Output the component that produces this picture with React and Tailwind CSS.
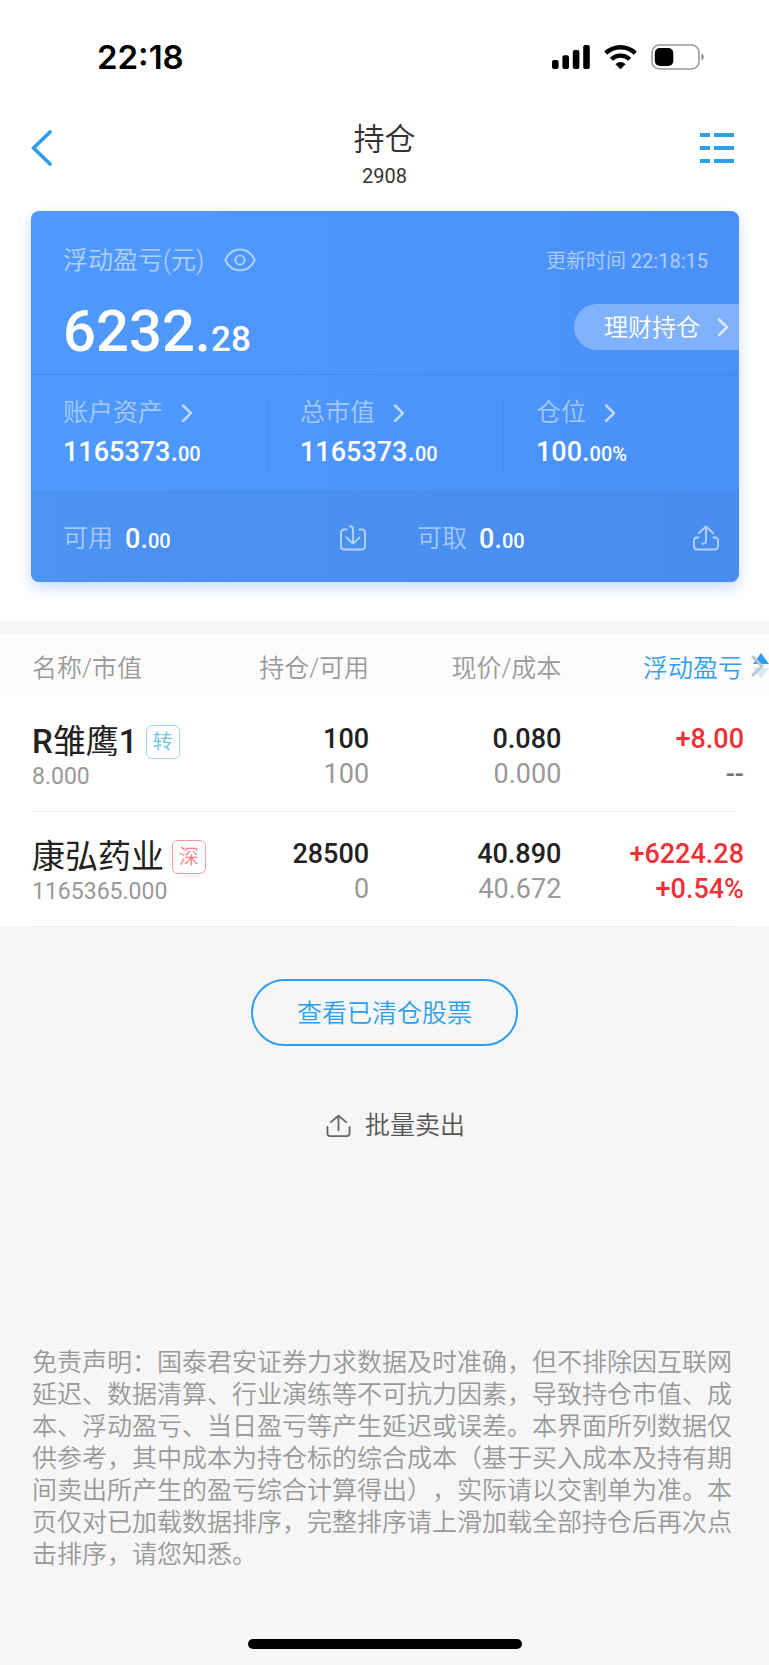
import React from "react";

const holdings = [
  {
    name: "R雏鹰1",
    tag: "转",
    tagClass: "border-[#9bd6ec] text-[#6cc5e4]",
    marketValue: "8.000",
    position: "100",
    available: "100",
    price: "0.080",
    cost: "0.000",
    profit: "+8.00",
    rate: "--",
    rateClass: "text-[#777777]",
  },
  {
    name: "康弘药业",
    tag: "深",
    tagClass: "border-[#fb9aa2] text-[#fb7f89]",
    marketValue: "1165365.000",
    position: "28500",
    available: "0",
    price: "40.890",
    cost: "40.672",
    profit: "+6224.28",
    rate: "+0.54%",
    rateClass: "text-[#f03037]",
  },
];

function Chevron({ className = "" }) {
  return (
    <svg className={className} width="12" height="20" viewBox="0 0 12 20" fill="none" stroke="currentColor" strokeWidth="2.5" strokeLinecap="round" strokeLinejoin="round" aria-hidden="true">
      <path d="M2 2.5 10 10.2 2 18" />
    </svg>
  );
}

function Amount({ whole, fraction }) {
  return (
    <p className="text-[27px] font-medium leading-[38px] text-white">
      {whole}.<span className="text-xl leading-none">{fraction}</span>
    </p>
  );
}

function StatusBar() {
  return (
    <div className="flex h-[114px] items-center justify-between pl-[97px] pr-16">
      <span className="font-['Inter',sans-serif] text-[33px] font-semibold leading-10 text-black">22:18</span>
      <div className="flex items-center gap-[14px]">
        <svg width="38" height="24" viewBox="0 0 38 24" fill="#000" aria-hidden="true">
          <rect x="0" y="15" width="6.6" height="9" rx="2" />
          <rect x="10.4" y="10.3" width="6.6" height="13.7" rx="2" />
          <rect x="20.8" y="5" width="6.6" height="19" rx="2" />
          <rect x="31.2" y="0" width="6.6" height="24" rx="2" />
        </svg>
        <svg width="33" height="24" viewBox="0 0 33 24" aria-hidden="true">
          <path d="M1.7 8.2a21.4 21.4 0 0 1 29.6 0" fill="none" stroke="#000" strokeWidth="4.4" />
          <path d="M7.3 14.2a13.4 13.4 0 0 1 18.4 0" fill="none" stroke="#000" strokeWidth="4.2" />
          <path d="M16.5 24 11.8 19.2a6.8 6.8 0 0 1 9.4 0Z" fill="#000" stroke="#000" strokeWidth="0.6" strokeLinejoin="round" />
        </svg>
        <svg width="54" height="26" viewBox="0 0 54 26" aria-hidden="true">
          <rect x="1" y="1" width="47" height="24" rx="7.5" fill="none" stroke="#999" strokeWidth="1.6" />
          <rect x="3.8" y="4" width="18.5" height="18" rx="5" fill="#000" />
          <path d="M50.4 9.5c3.4 1 3.4 6 0 7Z" fill="#999" />
        </svg>
      </div>
    </div>
  );
}

function Header() {
  return (
    <header className="grid grid-cols-[1fr_auto_1fr] px-[31px] pt-[5px]">
      <button type="button" aria-label="返回" className="mt-[7px] h-11 w-11 justify-self-start text-[#2e9fee]">
        <svg width="22" height="36" viewBox="0 0 22 36" fill="none" stroke="currentColor" strokeWidth="3.8" strokeLinecap="round" strokeLinejoin="round" aria-hidden="true">
          <path d="M19 2 2.5 18 19 34" />
        </svg>
      </button>
      <div className="text-center text-[#333333]">
        <h1 className="text-[31px] font-[350] leading-[42px]">持仓</h1>
        <p className="text-xl font-normal leading-[30px]">2908</p>
      </div>
      <button type="button" aria-label="菜单" className="mt-[7px] flex h-11 w-11 items-center justify-end justify-self-end pr-1 text-[#2e9fee]">
        <svg width="34" height="30" viewBox="0 0 34 30" fill="currentColor" aria-hidden="true">
          <path d="M0 0h10v4H0zM14 0h20v4H14zM0 13h10v4H0zM14 13h20v4H14zM0 26h10v4H0zM14 26h20v4H14z" />
        </svg>
      </button>
    </header>
  );
}

function Stat({ label, whole, fraction, divided }) {
  return (
    <div className={divided ? "border-l border-dotted border-[#3f83e6] pl-8" : "pl-8"}>
      <a href="#detail" className="flex items-center text-white/50">
        <span className="text-[25px] font-[350] leading-[30px]">{label}</span>
        <Chevron className="ml-[18px] text-white/65" />
      </a>
      <div className="mt-[5px]">
        <Amount whole={whole} fraction={fraction} />
      </div>
    </div>
  );
}

function Summary() {
  return (
    <section className="ml-[31px] mr-[30px] mt-5 overflow-hidden rounded-lg bg-linear-to-r from-[#5099fc] to-[#4990f8] shadow-[0_6px_14px_rgba(73,144,248,0.3)]">
      <div className="border-b border-[#4389ee] pb-6 pl-8 pt-[34px]">
        <div className="flex items-center justify-between pr-[31px] leading-8 text-white/55">
          <div className="flex items-center">
            <span className="text-[25px] font-[350]">浮动盈亏(元)</span>
            <button type="button" aria-label="显示或隐藏金额" className="mb-0.5 ml-5">
              <svg width="32" height="24" viewBox="0 0 32 24" fill="none" stroke="currentColor" strokeWidth="1.9" aria-hidden="true">
                <path d="M1.3 12C4.500 5.200 9.600 1.500 16 1.500S27.500 5.200 30.700 12C27.500 18.800 22.400 22.300 16 22.300S4.500 18.800 1.300 12Z" strokeLinejoin="round" />
                <circle cx="16" cy="12" r="4.600" />
              </svg>
            </button>
          </div>
          <span className="text-xl font-[350]">
            更新时间 <span className="font-normal">22:18:15</span>
          </span>
        </div>
        <div className="mt-[27px] flex h-[46px] items-start justify-between">
          <p className="text-[58px] font-medium leading-[54px] text-white">
            6232.<span className="text-[35px] leading-none">28</span>
          </p>
          <button type="button" className="flex h-full items-center rounded-l-full bg-white/30 pl-[30px] pr-2.5 text-white">
            <span className="pt-0.5 text-[24px] font-[350] leading-8">理财持仓</span>
            <Chevron className="ml-[17px] text-white/75" />
          </button>
        </div>
      </div>
      <div className="grid grid-cols-3 pb-[19px] pt-[23px]">
        <Stat label="账户资产" whole="1165373" fraction="00" />
        <Stat label="总市值" whole="1165373" fraction="00" divided />
        <Stat label="仓位" whole="100" fraction="00%" divided />
      </div>
      <div className="grid h-[92px] grid-cols-2 bg-[#3f7fcc]/20 pt-1.5">
        <div className="flex items-center gap-3 pl-8 pr-[19px]">
          <span className="text-[25px] font-[350] leading-8 text-white/50">可用</span>
          <Amount whole="0" fraction="00" />
          <button type="button" aria-label="转入" className="mb-0.5 ml-auto text-white/60">
            <svg width="26" height="26" viewBox="0 0 26 26" fill="none" stroke="currentColor" strokeWidth="1.9" strokeLinecap="round" strokeLinejoin="round" aria-hidden="true">
              <path d="M6.500 4.500H4a3 3 0 0 0-3 3V21.500a3 3 0 0 0 3 3H22a3 3 0 0 0 3-3V7.500a3 3 0 0 0-3-3H19.500" />
              <path d="M10 1.200c2.200 0 3 1.200 3 3.300V18.500M6.500 12.500 13 18.600 19.500 12.500" />
            </svg>
          </button>
        </div>
        <div className="flex items-center gap-3 pl-8 pr-5">
          <span className="text-[25px] font-[350] leading-8 text-white/50">可取</span>
          <Amount whole="0" fraction="00" />
          <button type="button" aria-label="转出" className="mb-0.5 ml-auto text-white/60">
            <svg width="26" height="26" viewBox="0 0 26 26" fill="none" stroke="currentColor" strokeWidth="1.9" strokeLinecap="round" strokeLinejoin="round" aria-hidden="true">
              <path d="M5.500 12.500H4a3 3 0 0 0-3 3V21.500a3 3 0 0 0 3 3H22a3 3 0 0 0 3-3V15.500a3 3 0 0 0-3-3H20.500" />
              <path d="M9.500 18.800c2.500 0 3.500-1.200 3.500-3.600V1.800M6 8 13 1.400 20 8" />
            </svg>
          </button>
        </div>
      </div>
    </section>
  );
}

function Separator() {
  return (
    <tr aria-hidden="true">
      <td colSpan={4} className="pl-8 pr-[33px]">
        <div className="h-px bg-[#ececec]" />
      </td>
    </tr>
  );
}

function StockName({ name }) {
  return (
    <span className="text-[33px] leading-9 text-[#222222]">
      {name.split(/([A-Z0-9]+)/).map((part, i) => (
        <span key={i} className={i % 2 ? "font-medium" : "font-normal"}>{part}</span>
      ))}
    </span>
  );
}

function Holdings() {
  return (
    <table className="w-full table-fixed border-collapse bg-white">
      <colgroup>
        <col className="w-[25%]" />
        <col className="w-[23%]" />
        <col className="w-[25%]" />
        <col className="w-[27%]" />
      </colgroup>
      <thead>
        <tr className="h-[63px] bg-[#fcfcfc] text-[25px] leading-8 text-[#999999]">
          <th scope="col" className="whitespace-nowrap pl-8 pt-1.5 text-left font-[350]">名称/市值</th>
          <th scope="col" className="whitespace-nowrap pt-1.5 text-right font-[350]">持仓/可用</th>
          <th scope="col" className="whitespace-nowrap pt-1.5 text-right font-[350]">现价/成本</th>
          <th scope="col" className="relative whitespace-nowrap pr-[26px] pt-1.5 text-right font-[350] text-[#2e9fee]">
            浮动盈亏
            <svg className="absolute right-0 top-[18px]" width="19" height="28" viewBox="0 0 19 28" aria-hidden="true">
              <path d="M11 1 19 12H3Z" fill="#2e9fee" />
              <path d="M3 16H19L11 26Z" fill="#dbe6ef" />
              <path d="M3 5 12 14 3 23" fill="none" stroke="#b9c6d4" strokeWidth="3" strokeLinecap="round" />
            </svg>
          </th>
        </tr>
      </thead>
      <tbody>
        {holdings.map((h) => (
          <React.Fragment key={h.name}>
            <tr className="align-top text-right text-[27px]">
              <td className="whitespace-nowrap pb-[17px] pl-8 pt-[27px] text-left">
                <div className="flex items-center">
                  <StockName name={h.name} />
                  <span className={`ml-2 flex h-[34px] w-[34px] shrink-0 items-center justify-center rounded-md border text-xl font-[350] leading-6 ${h.tagClass}`}>
                    {h.tag}
                  </span>
                </div>
                <div className="text-[23px] leading-[34px] text-[#999999]">{h.marketValue}</div>
              </td>
              <td className="pt-6">
                <div className="font-medium leading-9 text-[#222222]">{h.position}</div>
                <div className="leading-[34px] text-[#999999]">{h.available}</div>
              </td>
              <td className="pt-6">
                <div className="font-medium leading-9 text-[#222222]">{h.price}</div>
                <div className="leading-[34px] text-[#999999]">{h.cost}</div>
              </td>
              <td className="pr-[25px] pt-6">
                <div className="font-medium leading-9 text-[#f03037]">{h.profit}</div>
                <div className={`font-medium leading-[34px] ${h.rateClass}`}>{h.rate}</div>
              </td>
            </tr>
            <Separator />
          </React.Fragment>
        ))}
      </tbody>
    </table>
  );
}

export default function App() {
  return (
    <main className="flex min-h-screen flex-col bg-[#f6f6f6] font-['Roboto','Noto_Sans_CJK_SC',sans-serif]" lang="zh-CN">
      <div className="bg-white pb-[39px]">
        <StatusBar />
        <Header />
        <Summary />
      </div>
      <div className="h-[13px] shrink-0 bg-[#f5f5f5]" />
      <Holdings />
      <button type="button" className="mx-auto mt-[52px] h-[67px] rounded-full border-2 border-[#2e9fee] px-11 pt-0.5 text-[25px] font-[350] leading-8 text-[#2e9fee]">
        查看已清仓股票
      </button>
      <button type="button" className="mx-auto mt-16 flex items-center gap-3.5 pl-[22px] text-[25px] font-[350] leading-8 text-[#555555]">
        <svg width="25" height="24" viewBox="0 0 26 24" fill="none" stroke="#666" strokeWidth="1.9" strokeLinecap="round" strokeLinejoin="round" aria-hidden="true">
          <path d="M1.500 13V19.500a3 3 0 0 0 3 3H21.500a3 3 0 0 0 3-3V13" />
          <path d="M13 16.500V1.500M5 8 13 1.300 21 8" />
        </svg>
        批量卖出
      </button>
      <p className="mt-[205px] pb-10 pl-8 pr-9 text-[25px] font-[350] leading-8 text-[#999999] [text-spacing-trim:space-all]">
        免责声明：国泰君安证券力求数据及时准确，但不排除因互联网延迟、数据清算、行业演练等不可抗力因素，导致持仓市值、成本、浮动盈亏、当日盈亏等产生延迟或误差。本界面所列数据仅供参考，其中成本为持仓标的综合成本（基于买入成本及持有期间卖出所产生的盈亏综合计算得出），实际请以交割单为准。本页仅对已加载数据排序，完整排序请上滑加载全部持仓后再次点击排序，请您知悉。
      </p>
      <div className="mx-auto mb-4 mt-auto h-2.5 w-[274px] rounded-full bg-black" />
    </main>
  );
}
